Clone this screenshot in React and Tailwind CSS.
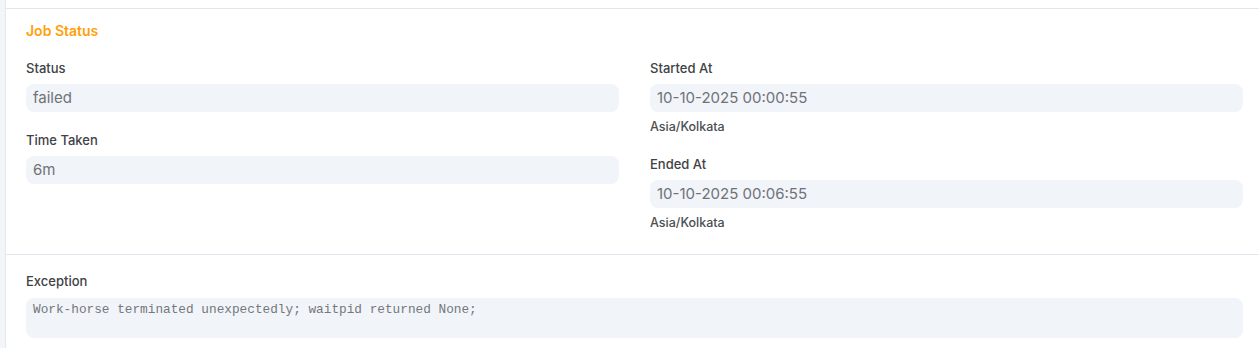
export default function App() {
  const inputCls =
    "h-7 rounded-lg bg-[#f1f4f9] px-[7px] flex items-center text-[15px] text-[#6f7277]";
  const labelCls = "text-[13px] leading-[18px] font-medium text-[#404246]";
  const descCls = "mt-[6px] text-[12.5px] leading-[18px] font-medium text-[#4b4e53]";
  return (
    <div
      className="flex min-h-[348px] w-full bg-[#f4f5f8]"
      style={{ fontFamily: "Inter, 'Noto Sans', sans-serif" }}
    >
      <div className="w-[5px] shrink-0" />
      <div className="flex-1 bg-white border-l border-[#e5e8ef]">
        <div className="h-2" />
        <section className="border-t border-[#e3e6ee] pl-5 pr-4 pt-3 pb-[22px]">
          <h3 className="text-[14px] leading-5 font-semibold text-[#ff9f0a]">Job Status</h3>
          <div className="mt-[18px] grid grid-cols-2 gap-x-[31px]">
            <div className="flex flex-col gap-[19px]">
              <div>
                <div className={labelCls}>Status</div>
                <div className={"mt-[7px] " + inputCls}>failed</div>
              </div>
              <div>
                <div className={labelCls}>Time Taken</div>
                <div className={"mt-[7px] " + inputCls}>6m</div>
              </div>
            </div>
            <div className="flex flex-col gap-[19px]">
              <div>
                <div className={labelCls}>Started At</div>
                <div className={"mt-[7px] " + inputCls}>10-10-2025 00:00:55</div>
                <div className={descCls}>Asia/Kolkata</div>
              </div>
              <div>
                <div className={labelCls}>Ended At</div>
                <div className={"mt-[7px] " + inputCls}>10-10-2025 00:06:55</div>
                <div className={descCls}>Asia/Kolkata</div>
              </div>
            </div>
          </div>
        </section>
        <section className="border-t border-[#e3e6ee] pl-5 pr-4 pt-[17px] pb-[10px]">
          <div className={labelCls}>Exception</div>
          <div
            className="mt-[8px] h-10 rounded-lg bg-[#f1f4f9] px-[7px] pt-[4px] text-[12.75px] leading-[16px] text-[#74777c]"
            style={{ fontFamily: "'Liberation Mono', monospace" }}
          >
            Work-horse terminated unexpectedly; waitpid returned None;
          </div>
        </section>
      </div>
    </div>
  );
}
